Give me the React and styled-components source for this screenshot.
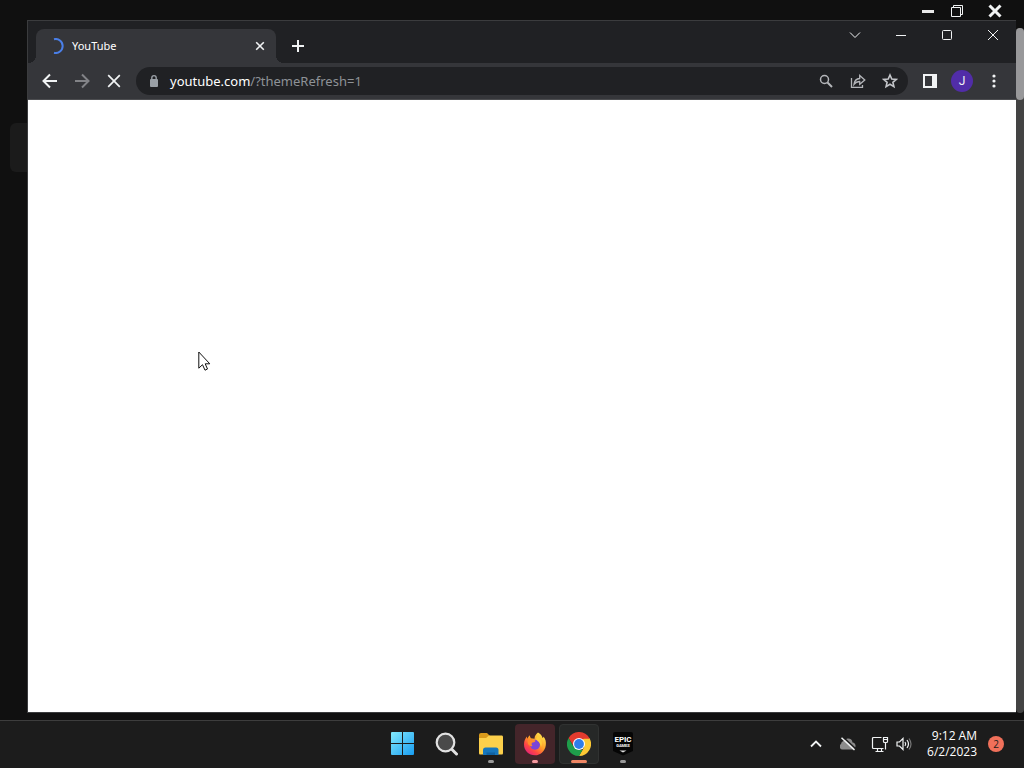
import React from 'react';
import styled, { createGlobalStyle } from 'styled-components';

const GlobalStyle = createGlobalStyle`
  * {
    box-sizing: border-box;
  }

  body {
    margin: 0;
    background: #101010;
    color: #fff;
    font-family: 'Open Sans', 'Noto Sans', sans-serif;
    font-size: 12px;
    overflow: hidden;
  }

  svg {
    display: block;
    flex: none;
  }
`;

const Desktop = styled.div`
  display: flex;
  flex-direction: column;
  height: 100vh;
`;

const Launcher = styled.main`
  flex: 1;
  min-height: 0;
  display: flex;
  flex-direction: column;
  padding-bottom: 7px;
`;

const LauncherBar = styled.div`
  display: flex;
  justify-content: flex-end;
  align-items: center;
  height: 20px;
  padding: 2px 14px 0 0;
  gap: 14px;
`;

const IconButton = styled.button`
  display: flex;
  align-items: center;
  justify-content: center;
  width: ${({ $w }) => $w || 32}px;
  height: ${({ $h }) => $h || 28}px;
  padding: 0;
  border: 0;
  background: none;
  color: ${({ $color }) => $color || '#f1f3f4'};
`;

const LauncherBody = styled.div`
  flex: 1;
  min-height: 0;
  display: flex;
`;

const Rail = styled.div`
  width: 27px;
  padding: 103px 0 0 10px;
`;

const RailItem = styled.div`
  height: 49px;
  border-radius: 6px 0 0 6px;
  background: #1b1b1b;
`;

const ScrollTrack = styled.div`
  width: 8px;
  margin-top: 8px;
  border-radius: 4px;
  background: #434343;
`;

const ScrollThumb = styled.div`
  height: 72px;
  border-radius: 4px;
  background: #98989a;
`;

const Browser = styled.section`
  flex: 1;
  min-width: 0;
  display: flex;
  flex-direction: column;
  border: solid #3b3c3e;
  border-width: 1px 0 1px 1px;
`;

const TabStrip = styled.header`
  display: flex;
  align-items: flex-start;
  height: 42px;
  padding-left: 8px;
  background: #202124;
`;

const Tab = styled.div`
  position: relative;
  display: flex;
  align-items: center;
  width: 240px;
  height: 34px;
  margin-top: 8px;
  padding: 0 5px 0 13px;
  border-radius: 8px 8px 0 0;
  background: #35363a;

  &::before,
  &::after {
    content: '';
    position: absolute;
    bottom: 0;
    width: 8px;
    height: 8px;
  }

  &::before {
    right: 100%;
    background: radial-gradient(circle at 0 0, transparent 8px, #35363a 8px);
  }

  &::after {
    left: 100%;
    background: radial-gradient(circle at 100% 0, transparent 8px, #35363a 8px);
  }
`;

const TabTitle = styled.span`
  flex: 1;
  margin-left: 7px;
  font-family: 'Noto Sans', sans-serif;
  font-size: 11px;
  line-height: 16px;
`;

const WindowControls = styled.div`
  display: flex;
  margin-left: auto;
`;

const Toolbar = styled.div`
  display: flex;
  align-items: center;
  height: 37px;
  padding: 0 6px;
  background: #35363a;
  border-bottom: 1px solid #4c4d50;
`;

const AddressBar = styled.form`
  flex: 1;
  display: flex;
  align-items: center;
  height: 28px;
  margin: 0 6px;
  padding: 0 2px 0 12px;
  border-radius: 14px;
  background: #202124;
  font-family: 'Noto Sans', sans-serif;
  font-size: 13px;
`;

const Host = styled.label`
  margin-left: 10px;
  line-height: 20px;
`;

const PathInput = styled.input`
  flex: 1;
  min-width: 0;
  height: 20px;
  padding: 0;
  border: 0;
  outline: 0;
  background: none;
  color: #8e9297;
  font: inherit;
  line-height: 20px;
`;

const Avatar = styled.span`
  width: 22px;
  height: 22px;
  border-radius: 50%;
  background: #512da8;
  font: 12px/22px Roboto, sans-serif;
  text-align: center;
`;

const Page = styled.div`
  flex: 1;
  background: #fff;
`;

const Pointer = styled.svg`
  position: absolute;
  left: 198px;
  top: 351px;
`;

const Taskbar = styled.footer`
  display: grid;
  grid-template-columns: 1fr auto 1fr;
  align-items: center;
  height: 48px;
  padding-bottom: 1px;
  border-top: 1px solid #3d3d3d;
  background: #1c1c1c;
`;

const Apps = styled.nav`
  grid-column: 2;
  display: flex;
  gap: 4px;
  padding-left: 2px;
`;

const AppButton = styled.button`
  position: relative;
  display: flex;
  align-items: center;
  justify-content: center;
  width: 40px;
  height: 40px;
  padding: 0;
  border: 1px solid ${({ $edge }) => $edge || 'transparent'};
  border-radius: 4px;
  background: ${({ $bg }) => $bg || 'none'};

  &::after {
    content: '';
    position: absolute;
    bottom: 0;
    width: ${({ $mark }) => $mark || 0}px;
    height: 3px;
    border-radius: 2px;
    background: ${({ $markColor }) => $markColor || '#9a9a9a'};
  }
`;

const Tray = styled.div`
  display: flex;
  align-items: center;
  justify-content: flex-end;
  padding-right: 20px;
`;

const Clock = styled.time`
  margin-left: 15px;
  line-height: 16px;
  text-align: right;
`;

const Badge = styled.span`
  width: 16px;
  height: 16px;
  margin-left: 11px;
  border-radius: 50%;
  background: #f0705a;
  color: #1c1c1c;
  font-size: 10px;
  line-height: 16px;
  text-align: center;
`;

const Stroke = ({ size = 16, width = 2, children }) => (
  <svg width={size} height={size} viewBox="0 0 16 16" fill="none" stroke="currentColor" strokeWidth={width}>
    {children}
  </svg>
);

const WindowsLogo = () => (
  <svg width="24" height="24" viewBox="0 0 24 24">
    <defs>
      <linearGradient id="win" gradientUnits="userSpaceOnUse" x1="1" y1="1" x2="23" y2="23">
        <stop offset="0" stopColor="#7ee6fb" />
        <stop offset="1" stopColor="#189df2" />
      </linearGradient>
    </defs>
    <path fill="url(#win)" d="M1 0H11V11H0V1Q0 0 1 0ZM12 0H22Q23 0 23 1V11H12ZM0 12H11V23H1Q0 23 0 22ZM12 12H23V22Q23 23 22 23H12Z" />
  </svg>
);

const SearchLogo = () => (
  <svg width="24" height="24" viewBox="0 0 24 24" fill="none" stroke="#e2e2e2" strokeLinecap="round">
    <path d="M17 17.500L21.500 22" strokeWidth="3" />
    <circle cx="10.500" cy="10.500" r="8.800" fill="#4a4a4a" strokeWidth="2.200" />
  </svg>
);

const FolderLogo = () => (
  <svg width="26" height="24" viewBox="0 0 26 24">
    <path fill="#d99a1b" d="M1 3Q1 1 3 1H9L12 4V8H1Z" />
    <path fill="#fcd04b" d="M1 6H8L11 3.500H24Q25 3.500 25 5V21Q25 22.500 24 22.500H2Q1 22.500 1 21Z" />
    <path fill="#1677bd" d="M5 23V18Q5 15.500 7.500 15.500H18Q20.500 15.500 20.500 18V23Z" />
    <path fill="#0f62a3" d="M8.500 23V20.500H17V23Z" />
  </svg>
);

const FirefoxLogo = () => (
  <svg width="24" height="24" viewBox="0 0 24 24">
    <defs>
      <linearGradient id="fox" x1=".85" y1=".1" x2=".2" y2=".95">
        <stop offset="0" stopColor="#ffe24a" />
        <stop offset=".45" stopColor="#ff9a26" />
        <stop offset=".75" stopColor="#ff4545" />
        <stop offset="1" stopColor="#e62379" />
      </linearGradient>
    </defs>
    <path fill="url(#fox)" d="M15 .5C17.800 2 19 3.800 19.600 6C20.300 5.700 20.500 5 20.500 4.500C22.600 7 23.200 10 22.800 13.200C22 19.200 17.500 23.300 12 23.300C5.800 23.300 1 18.500 1 12.500C1 9 2.200 6.600 3.800 4.500L4.200 6.800L6.500 3.300L7.800 6.200L11.500 6.800C11.500 4 13 2 15 .5Z" />
    <circle cx="12" cy="12.800" r="5" fill="#7a45d6" />
    <path fill="#ff8a2b" d="M4.500 8.500C7 6.500 10 7.500 12.500 8.700C12 10.200 10 10.200 9 10.800C8.300 12 8.500 13 9.500 14C8 15 6 13.500 5 12Z" />
    <path fill="#ffce3c" d="M15 4C18.500 7 20 11 18 15C17.500 11 15.500 9.500 13.500 8C13 6.500 13.800 5 15 4Z" />
  </svg>
);

const ChromeLogo = () => (
  <svg width="24" height="24" viewBox="0 0 24 24">
    <path fill="#e33b2e" d="M12 12L1.600 6A12 12 0 0 1 22.400 6Z" />
    <path fill="#fcc934" d="M12 12L17.200 6H22.400A12 12 0 0 1 12 24L17.200 15Z" />
    <path fill="#1e9e4a" d="M1.600 6L6.800 15L12 18H15.500L12 24A12 12 0 0 1 1.600 6Z" />
    <path fill="#e33b2e" d="M1.600 6H22.400V6.700H12L7 14.800Z" />
    <circle cx="12" cy="12" r="6" fill="#fff" />
    <circle cx="12" cy="12" r="4.900" fill="#2f7de9" />
  </svg>
);

const EpicLogo = () => (
  <svg width="22" height="26" viewBox="0 0 22 26">
    <path fill="#050505" d="M3 1H19Q21 1 21 3V20L11 24.500L1 20V3Q1 1 3 1Z" />
    <text x="11" y="11" fill="#fff" fontSize="8" fontWeight="700" fontFamily="Roboto, sans-serif" textAnchor="middle">EPIC</text>
    <text x="11" y="16" fill="#fff" fontSize="4" fontWeight="700" fontFamily="Roboto, sans-serif" textAnchor="middle">GAMES</text>
    <path fill="#ddd" d="M7.500 19.500H14.500L11 21.500Z" />
  </svg>
);

const App = () => (
  <>
    <GlobalStyle />
    <Desktop>
      <Launcher>
        <LauncherBar>
          <IconButton $w={16} $h={16} aria-label="Minimize launcher">
            <svg width="12" height="16"><path fill="#e8e8e8" d="M0 7H12V10H0Z" /></svg>
          </IconButton>
          <IconButton $w={16} $h={16} aria-label="Restore launcher">
            <Stroke width={1}>
              <path d="M1.500 4.500H10.500V13.500H1.500ZM3.500 4.500V2.500H12.500V11.500H10.500" />
            </Stroke>
          </IconButton>
          <IconButton $w={30} $h={16} aria-label="Close launcher">
            <Stroke width={3}><path d="M2.500 2.500L13.500 13.500M13.500 2.500L2.500 13.500" /></Stroke>
          </IconButton>
        </LauncherBar>

        <LauncherBody>
          <Rail>
            <RailItem />
          </Rail>

          <Browser>
            <TabStrip>
              <Tab>
                <svg width="16" height="16" viewBox="0 0 16 16" fill="none" stroke="#4a7fe8" strokeWidth="2">
                  <path d="M5 1.200A7 7 0 1 1 5 14.800" />
                </svg>
                <TabTitle>YouTube</TabTitle>
                <IconButton $w={22} $h={22} aria-label="Close tab">
                  <Stroke width={1.6}><path d="M4.200 4.200L11.800 11.800M11.800 4.200L4.200 11.800" /></Stroke>
                </IconButton>
              </Tab>
              <IconButton $w={44} $h={50} aria-label="New tab">
                <Stroke width={2}><path d="M8 2V14M2 8H14" /></Stroke>
              </IconButton>
              <WindowControls>
                <IconButton $w={46} aria-label="Search tabs">
                  <Stroke width={1}><path d="M3 5.500L8 10.500L13 5.500" /></Stroke>
                </IconButton>
                <IconButton $w={46} aria-label="Minimize">
                  <Stroke width={1}><path d="M3 8.500H13" /></Stroke>
                </IconButton>
                <IconButton $w={46} aria-label="Maximize">
                  <Stroke width={1}><rect x="3.500" y="3.500" width="9" height="9" rx="1" /></Stroke>
                </IconButton>
                <IconButton $w={46} aria-label="Close">
                  <Stroke width={1}><path d="M3 3L13 13M13 3L3 13" /></Stroke>
                </IconButton>
              </WindowControls>
            </TabStrip>

            <Toolbar>
              <IconButton aria-label="Back">
                <Stroke width={2}><path d="M15 8H2M8 1.500L1.500 8L8 14.500" /></Stroke>
              </IconButton>
              <IconButton $color="#828387" aria-label="Forward">
                <Stroke width={2}><path d="M1 8H14M8 1.500L14.500 8L8 14.500" /></Stroke>
              </IconButton>
              <IconButton aria-label="Stop loading">
                <Stroke width={1.7}><path d="M2.200 2.200L13.800 13.800M13.800 2.200L2.200 13.800" /></Stroke>
              </IconButton>

              <AddressBar>
                <svg width="12" height="14" viewBox="0 0 12 14">
                  <rect x="2" y="5" width="8" height="8" rx="1" fill="#9aa0a6" />
                  <path d="M3.800 5.500V3.800A2.200 2.200 0 0 1 8.200 3.800V5.500" fill="none" stroke="#9aa0a6" strokeWidth="1.400" />
                </svg>
                <Host htmlFor="address">youtube.com</Host>
                <PathInput id="address" defaultValue="/?themeRefresh=1" spellCheck="false" />
                <IconButton type="button" $color="#b4b6ba" aria-label="Zoom">
                  <Stroke width={1.5}>
                    <circle cx="6.500" cy="6.500" r="4" />
                    <path d="M9.500 9.500L14 14" strokeWidth="2" />
                  </Stroke>
                </IconButton>
                <IconButton type="button" $color="#b4b6ba" aria-label="Share this page">
                  <Stroke width={1.3}>
                    <path d="M1.500 5V14.300H12.500V12M4 11.300C4.500 7.500 6.500 5.800 9.700 5.500V2.500L14.800 7L9.700 11.300V8.500C7.200 8.400 5.500 9.300 4 11.300Z" />
                  </Stroke>
                </IconButton>
                <IconButton type="button" $color="#c4c6ca" aria-label="Bookmark this tab">
                  <Stroke width={1.6}>
                    <path d="M8 2L9.800 6L14.200 6.400L10.900 9.300L11.900 13.600L8 11.300L4.100 13.600L5.100 9.300L1.800 6.400L6.200 6Z" />
                  </Stroke>
                </IconButton>
              </AddressBar>

              <IconButton aria-label="Side panel">
                <svg width="14" height="14" viewBox="0 0 14 14">
                  <path fill="currentColor" fillRule="evenodd" d="M0 0H14V14H0ZM2 2V12H9V2Z" />
                </svg>
              </IconButton>
              <IconButton aria-label="Profile">
                <Avatar>J</Avatar>
              </IconButton>
              <IconButton aria-label="Menu">
                <svg width="4" height="14" viewBox="0 0 4 14" fill="currentColor">
                  <circle cx="2" cy="2" r="1.600" />
                  <circle cx="2" cy="7" r="1.600" />
                  <circle cx="2" cy="12" r="1.600" />
                </svg>
              </IconButton>
            </Toolbar>
            <Page />
          </Browser>

          <ScrollTrack>
            <ScrollThumb />
          </ScrollTrack>
        </LauncherBody>
      </Launcher>

      <Taskbar>
        <Apps>
          <AppButton aria-label="Start"><WindowsLogo /></AppButton>
          <AppButton aria-label="Search"><SearchLogo /></AppButton>
          <AppButton aria-label="File Explorer" $mark={6}><FolderLogo /></AppButton>
          <AppButton aria-label="Firefox" $bg="#44252a" $mark={6} $markColor="#f59aa0"><FirefoxLogo /></AppButton>
          <AppButton aria-label="Chrome" $bg="#262827" $edge="#303231" $mark={16} $markColor="#f08765"><ChromeLogo /></AppButton>
          <AppButton aria-label="Epic Games" $mark={6}><EpicLogo /></AppButton>
        </Apps>
        <Tray>
          <IconButton aria-label="Show hidden icons">
            <Stroke width={1.8}><path d="M3 10.500L8 5.500L13 10.500" /></Stroke>
          </IconButton>
          <IconButton aria-label="OneDrive">
            <Stroke width={1.5}>
              <path fill="#8c8c8c" stroke="none" d="M3 13.500A3 3 0 0 1 1 8A3.500 3.500 0 0 1 3.500 5A5 5 0 0 1 8 2.500A4.500 4.500 0 0 1 12.500 6.500A3.600 3.600 0 0 1 13 13.500Z" />
              <path stroke="#1c1c1c" d="M3 1L15.500 12.500" />
              <path d="M1.500 1.800L14.500 14" />
            </Stroke>
          </IconButton>
          <IconButton aria-label="Network">
            <svg width="18" height="18" viewBox="0 0 18 18" fill="none" stroke="currentColor">
              <path strokeWidth="1.200" d="M10.500 2.500H2.500Q1.500 2.500 1.500 3.500V12.500Q1.500 13.500 2.500 13.500H12.500M6.500 13.500V16.500M10.500 13.500V16.500M4.500 16.500H12.500M12.500 2.500H16.500V6.500Q16.500 7.500 15.500 7.500H13.500Q12.500 7.500 12.500 6.500ZM12.500 4.500H16.500M14.500 7.500V14.500" />
            </svg>
          </IconButton>
          <IconButton $w={16} aria-label="Volume">
            <Stroke width={1.2}>
              <path d="M1 6H3.500L7 2.500V13.500L3.500 10H1ZM9 6Q10.500 8 9 10M11 4Q14 8 11 12" />
              <path stroke="#777" d="M13 2.500Q17 8 13 13.500" />
            </Stroke>
          </IconButton>
          <Clock>
            9:12 AM
            <br />
            6/2/2023
          </Clock>
          <Badge>2</Badge>
        </Tray>
      </Taskbar>
    </Desktop>

    <Pointer width="13" height="21" viewBox="0 0 13 21" fill="#fff" stroke="#111">
      <path d="M.8 1V17.200L4.500 13.700L7 19.200L9.500 18L7.200 12.800H11.800Z" />
    </Pointer>
  </>
);

export default App;
